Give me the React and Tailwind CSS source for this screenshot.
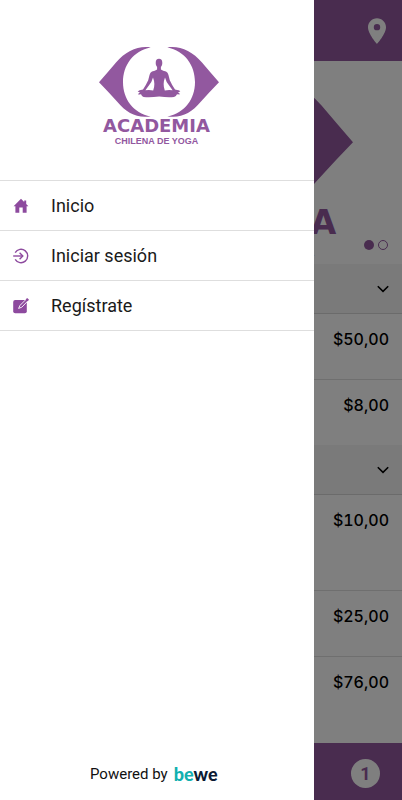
import React from 'react';

const menuItems = [
  { id: 'home', label: 'Inicio', icon: HomeIcon },
  { id: 'login', label: 'Iniciar sesión', icon: LoginIcon },
  { id: 'register', label: 'Regístrate', icon: EditIcon },
];

const sections = [
  { id: 1, prices: [{ value: '$50,00' }, { value: '$8,00' }] },
  { id: 2, prices: [{ value: '$10,00', tall: true }, { value: '$25,00' }, { value: '$76,00' }] },
];

function HomeIcon() {
  return (
    <svg className="w-4 h-4" viewBox="0 0 16 16" fill="currentColor">
      <path d="M8 0.8 L0.6 8.2 H2.4 V14.8 H6.3 V9.6 H9.7 V14.8 H13.6 V8.2 H15.4 L13.2 6 V2.4 H11.2 V4 Z" />
    </svg>
  );
}

function LoginIcon() {
  return (
    <svg className="w-4 h-4" viewBox="0 0 16 16" fill="none" stroke="currentColor" strokeWidth="1.4">
      <path d="M2.2 4.6 A6.7 6.7 0 1 1 2.2 11.4" />
      <path d="M0.2 8 H9.6" />
      <path d="M6.6 4.8 L9.8 8 L6.6 11.2" />
    </svg>
  );
}

function EditIcon() {
  return (
    <svg className="w-4 h-4" viewBox="0 0 16 16">
      <rect x="0.2" y="2" width="13.6" height="13.2" rx="2" fill="currentColor" />
      <path d="M5.6 10.4 L7 7.4 L13.8 0.6 L15.6 2.2 L8.8 9.2 Z" fill="currentColor" stroke="#fff" strokeWidth="0.9" strokeLinejoin="round" />
      <path d="M12.8 1.6 L14.2 0.1 L16 1.8 L14.6 3.3 Z" fill="currentColor" />
    </svg>
  );
}

function Logo({ className }) {
  return (
    <svg className={className} viewBox="0 0 120 100" fill="currentColor" role="img" aria-label="Academia Chilena de Yoga">
      {/* Eye */}
      <path d="M51.7 1.4 C39 -0.5 27 5 17 16.5 Q9 26 0 36.3 Q9 45.5 18 55.6 C28 67.5 38 72.5 51.7 70.4 C34 67 24 53 24 36 C24 19 34 5 51.7 1.4 Z" />
      <path d="M68.3 1.4 C81 -0.5 93 5 103 16.5 Q111 26 120 36.3 Q111 45.5 102 55.6 C92 67.5 82 72.5 68.3 70.4 C86 67 96 53 96 36 C96 19 86 5 68.3 1.4 Z" />
      {/* Yoga figure */}
      <ellipse cx="60" cy="17" rx="3.3" ry="4.2" />
      <path d="M58.1 19 H61.9 V23.4 Q64 24.9 67 25.4 Q68.8 26 69.4 28.8 L70.8 34.2 Q73 39 76 43.6 Q80.6 44.4 81.3 45.4 Q79.4 45.8 79 46.2 Q81.3 47.4 80.7 48.6 Q78.7 48 77.8 48.4 Q77.4 50 75 51 Q69 51.6 60.2 50.6 Q51 51.6 44.6 51 Q42.6 50 42.2 48.4 Q41 48.2 39.4 48.8 Q38.8 47.4 41 46.2 Q40 45.8 38.6 45.4 Q40 44.4 44 43.6 Q47 39 49.2 34.2 L50.6 28.8 Q51.2 26 53 25.4 Q56 24.9 58.1 23.4 Z" />
      <path d="M54 31.4 Q52.8 36 50.2 39 L46.4 44.2 Q50.6 43.6 54.2 44.4 Q56.6 38 54 31.4 Z" fill="#fff" />
      <path d="M66 31.4 Q67.2 36 69.8 39 L73.6 44.2 Q69.4 43.6 65.8 44.4 Q63.4 38 66 31.4 Z" fill="#fff" />
      <text x="57.5" y="86" textAnchor="middle" className="font-['DejaVu_Sans',sans-serif] text-[18px] font-bold">ACADEMIA</text>
      <text x="57.5" y="98" textAnchor="middle" className="font-['Liberation_Sans',sans-serif] text-[9px] font-bold">CHILENA DE YOGA</text>
    </svg>
  );
}

function PriceSection({ prices }) {
  return (
    <section>
      <button type="button" aria-label="Desplegar" className="w-full h-[50px] px-[13px] flex items-center justify-end bg-[#f4f4f4] border-b border-[#d6d6d6]">
        <svg className="w-3 h-2" viewBox="0 0 12 8" fill="none" stroke="#000" strokeWidth="1.6">
          <path d="M0.8 1.2 L6 6.4 L11.2 1.2" />
        </svg>
      </button>
      <ul className="divide-y divide-[#dedede]">
        {prices.map((price) => (
          <li
            key={price.value}
            className={`${price.tall ? 'h-24' : 'h-[66px] last:h-[65px]'} pt-3 pr-[13px] text-right font-['Inter',sans-serif] text-base leading-[26px] font-medium tabular-nums text-black`}
          >
            {price.value}
          </li>
        ))}
      </ul>
    </section>
  );
}

function ShopPage() {
  return (
    <div className="min-h-screen flex flex-col bg-white">
      <header className="h-[61px] px-4 flex items-center justify-end bg-[#92589f]">
        <button type="button" aria-label="Ubicación" className="text-white">
          <svg className="w-[18px] h-[26px]" viewBox="5 2 14 20" fill="currentColor">
            <path d="M12 2C8.13 2 5 5.13 5 9c0 5.25 7 13 7 13s7-7.75 7-13c0-3.87-3.13-7-7-7zm0 9.5a2.5 2.5 0 0 1 0-5 2.5 2.5 0 0 1 0 5z" />
          </svg>
        </button>
      </header>

      {/* Carousel */}
      <div className="relative flex justify-end pt-3.5 pb-1 pr-[49px]">
        <Logo className="w-[222px] text-[#92589f]" />
        <div className="absolute right-[14px] bottom-3.5 flex gap-1">
          <span className="w-[10px] h-[10px] rounded-full bg-[#92589f]" />
          <span className="w-[10px] h-[10px] rounded-full border border-[#92589f]" />
        </div>
      </div>

      <main className="flex-1">
        {sections.map((section) => (
          <PriceSection key={section.id} prices={section.prices} />
        ))}
      </main>

      <footer className="h-[57px] px-[22px] pt-1 flex items-center justify-end bg-[#92589f]">
        <span className="w-[29px] h-[29px] rounded-full bg-white flex items-center justify-center font-['Roboto',sans-serif] text-lg font-bold text-[#92589f]">
          1
        </span>
      </footer>
    </div>
  );
}

function SideMenu() {
  return (
    <aside className="w-[78%] h-full flex flex-col bg-white font-['Roboto',sans-serif]">
      <div className="pt-[46px] pb-[34px] flex items-start justify-center">
        <Logo className="w-[120px] ml-1 text-[#92589f]" />
      </div>

      <nav className="border-t border-[#dedede]">
        {menuItems.map(({ id, label, icon: Icon }) => (
          <a
            key={id}
            href={`#${id}`}
            className="h-[50px] pl-[13px] flex items-center gap-[22px] border-b border-[#dedede] text-lg text-[#1a1a1a]"
          >
            <span className="text-[#8d4a9e]"><Icon /></span>
            {label}
          </a>
        ))}
      </nav>

      <p className="mt-auto pb-4 pr-1.5 flex items-center justify-center gap-1.5 text-[15px] leading-5 text-[#111]">
        Powered by
        <span className="font-['Lato',sans-serif] text-lg leading-5 font-black text-[#12b0b0]">
          be<span className="text-[#0b1a33]">we</span>
        </span>
      </p>
    </aside>
  );
}

export default function App() {
  return (
    <div className="relative">
      <ShopPage />
      <div className="absolute inset-0 bg-black/50">
        <SideMenu />
      </div>
    </div>
  );
}
